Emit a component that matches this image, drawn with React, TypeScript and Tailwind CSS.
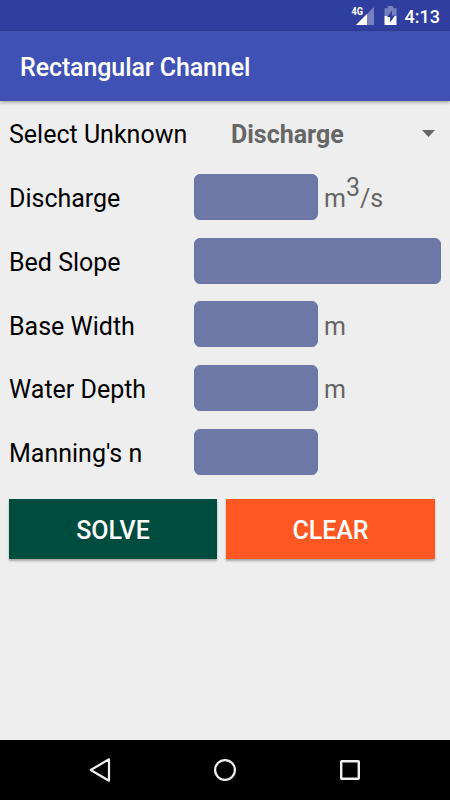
import React from "react";

type Field = { label: string; unit?: React.ReactNode; wide?: boolean };

const fields: Field[] = [
  {
    label: "Discharge",
    unit: (
      <>
        m<span className="relative -top-[11px]">3</span>/s
      </>
    ),
  },
  { label: "Bed Slope", wide: true },
  { label: "Base Width", unit: "m" },
  { label: "Water Depth", unit: "m" },
  { label: "Manning's n" },
];

function StatusBar() {
  return (
    <div className="flex h-[31px] shrink-0 items-center justify-end bg-[#303f9f] pr-[10px] text-white">
      <svg className="h-[31px] w-[26px]" viewBox="0 0 26 31">
        <path d="M24 7V25H6Z" fill="#7780c0" />
        <path d="M17 14V25H6Z" fill="#fff" />
        <text x="1.5" y="15" fontSize="11" fontWeight="700" fontFamily="Roboto, sans-serif" textLength="11.5" lengthAdjust="spacingAndGlyphs" fill="#fff">4G</text>
      </svg>
      <svg className="ml-[7px] h-[31px] w-[15px]" viewBox="0 0 15 31">
        <path d="M1.5 8.2H4.8V6H10.2V8.2H13.5V16H1.5Z" fill="#7780c0" />
        <path d="M1.5 16H13.5V25H1.5Z" fill="#fff" />
        <path d="M9 10.5L4 17H7V22.5L12 15.5H9Z" fill="#303f9f" />
      </svg>
      <span className="ml-[7px] pt-px text-[18px] leading-[31px] font-medium">4:13</span>
    </div>
  );
}

function NavBar() {
  return (
    <nav className="flex h-[60px] shrink-0 items-center justify-between bg-black px-[88px]">
      <svg className="h-6 w-6" viewBox="0 0 24 24" fill="none" stroke="#eee" strokeWidth="2.2" strokeLinejoin="round">
        <path d="M21 1.3V22.7L2.7 12Z" />
      </svg>
      <svg className="h-6 w-6" viewBox="0 0 24 24" fill="none" stroke="#eee" strokeWidth="2.2">
        <circle cx="12" cy="12" r="9.9" />
      </svg>
      <svg className="h-6 w-6" viewBox="0 0 24 24" fill="none" stroke="#eee" strokeWidth="2.4">
        <rect x="3.2" y="3.2" width="17.6" height="17.6" rx="0.5" />
      </svg>
    </nav>
  );
}

export default function App() {
  return (
    <div className="flex h-[800px] w-[450px] flex-col overflow-hidden bg-[#eeeeee] font-['Roboto',sans-serif]">
      <StatusBar />
      <header className="z-10 flex h-[70px] shrink-0 items-center bg-[#3f51b5] pt-[4px] pl-5 shadow-[0_1px_4px_rgba(0,0,0,0.4)]">
        <h1 className="text-[25px] font-medium tracking-[-0.1px] text-white">Rectangular Channel</h1>
      </header>
      <main className="flex flex-1 flex-col">
        <div className="flex h-[64px] items-center pl-[9px] text-[25px]">
          <span className="w-[222px] pt-[4px] text-black">Select Unknown</span>
          <span className="flex-1 pt-[4px] font-bold text-[#666]">Discharge</span>
          <svg className="mr-[15px] h-[7px] w-[13px]" viewBox="0 0 13 7">
            <path d="M0 0H13L6.5 7Z" fill="#666" />
          </svg>
        </div>
        {fields.map((f) => (
          <div key={f.label} className="flex h-[63.75px] items-center pl-[9px] text-[25px]">
            <label className="w-[184.5px] pt-[4px] text-black">{f.label}</label>
            <div className={`h-[46px] rounded-[6px] border border-[#6974a6] bg-[#6e78a7] ${f.wide ? "w-[247.5px]" : "w-[124px]"}`} />
            {f.unit && <span className="pt-[4px] pl-[6.5px] text-[#666]">{f.unit}</span>}
          </div>
        ))}
        <div className="mt-[15px] flex gap-[9px] pl-[9px] text-[25px] font-medium text-white">
          <button className="h-[60px] w-[208px] bg-[#004d40] pt-[4px] tracking-[-0.1px] shadow-[0_2px_2px_rgba(0,0,0,0.3)]">SOLVE</button>
          <button className="h-[60px] w-[209px] bg-[#ff5722] pt-[4px] tracking-[-0.1px] shadow-[0_2px_2px_rgba(0,0,0,0.3)]">CLEAR</button>
        </div>
      </main>
      <NavBar />
    </div>
  );
}
